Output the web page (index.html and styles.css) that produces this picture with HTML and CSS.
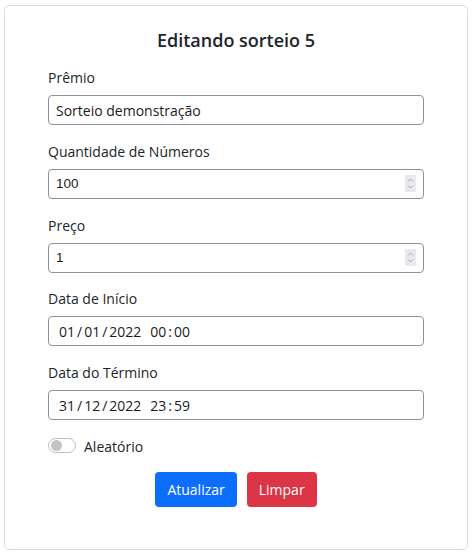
FILE: index.html
```html
<!DOCTYPE html>
<html lang="pt-BR">
<head>
<meta charset="utf-8">
<title>Editando sorteio 5</title>
<link rel="stylesheet" href="styles.css">
</head>
<body>
<div class="card">
  <h1 class="title">Editando sorteio 5</h1>
  <form class="form">
    <div class="field">
      <label class="label">Prêmio</label>
      <input class="control" type="text" value="Sorteio demonstração">
    </div>
    <div class="field">
      <label class="label">Quantidade de Números</label>
      <div class="num">
        <input class="control control-num" type="text" value="100">
        <span class="spin"><svg width="11" height="17" viewBox="0 0 11 17"><rect width="11" height="17" fill="#e9e9ed"/><path d="M3 6.5 L5.5 4 L8 6.5 M3 10.5 L5.5 13 L8 10.5" fill="none" stroke="#a4a4ae" stroke-width="1"/></svg></span>
      </div>
    </div>
    <div class="field">
      <label class="label">Preço</label>
      <div class="num">
        <input class="control control-num" type="text" value="1">
        <span class="spin"><svg width="11" height="17" viewBox="0 0 11 17"><rect width="11" height="17" fill="#e9e9ed"/><path d="M3 6.5 L5.5 4 L8 6.5 M3 10.5 L5.5 13 L8 10.5" fill="none" stroke="#a4a4ae" stroke-width="1"/></svg></span>
      </div>
    </div>
    <div class="field">
      <label class="label">Data de Início</label>
      <div class="control control-date"><span>01</span><span class="sep">/</span><span>01</span><span class="sep">/</span><span>2022</span><span class="time">00</span><span class="sep">:</span><span>00</span></div>
    </div>
    <div class="field">
      <label class="label">Data do Término</label>
      <div class="control control-date"><span>31</span><span class="sep">/</span><span>12</span><span class="sep">/</span><span>2022</span><span class="time">23</span><span class="sep">:</span><span>59</span></div>
    </div>
    <div class="switch-row">
      <span class="switch"><span class="knob"></span></span>
      <label class="switch-label">Aleatório</label>
    </div>
    <div class="actions">
      <button type="button" class="btn btn-primary">Atualizar</button>
      <button type="button" class="btn btn-danger">Limpar</button>
    </div>
  </form>
</div>
</body>
</html>
```
FILE: styles.css
```css
* { box-sizing: border-box; }
body {
  margin: 5px 4px;
  background: #fff;
  color: #212529;
  font-family: "Open Sans", "Noto Sans", sans-serif;
}
.card {
  border: 1px solid #dcdcdc;
  border-radius: 5px;
  padding: 21px 43px 42px;
}
.title {
  margin: 0 0 13px;
  font-size: 18px;
  line-height: 27px;
  font-weight: 600;
  text-align: center;
}
.field + .field { margin-top: 15.75px; }
.label {
  display: block;
  font-size: 14px;
  line-height: 21px;
  margin-bottom: 7px;
}
.control {
  display: block;
  width: 100%;
  height: 30px;
  border: 1px solid #8f8f9d;
  border-radius: 4px;
  padding: 0 7px;
  font-family: inherit;
  font-size: 14px;
  color: #1b1b1b;
  background: #fff;
  outline: none;
}
.num { position: relative; }
.control-num {
  font-family: "Liberation Sans", Arial, sans-serif;
  font-size: 13.5px;
}
.spin {
  position: absolute;
  right: 8px;
  top: 6px;
  width: 11px;
  height: 17px;
  display: block;
}
.spin svg { display: block; }
.control-date {
  display: flex;
  align-items: center;
  padding: 0 10px;
}
.control-date .sep { margin: 0 2px; }
.control-date .time { margin-left: 9px; }
.switch-row {
  display: flex;
  align-items: center;
  gap: 8px;
  height: 21px;
  margin-top: 15px;
}
.switch {
  position: relative;
  width: 28px;
  height: 15px;
  border: 1px solid #bdbdbd;
  border-radius: 8px;
  background: #fff;
}
.knob {
  position: absolute;
  left: 2px;
  top: 1px;
  width: 11px;
  height: 11px;
  border-radius: 50%;
  background: #c4c4c4;
}
.switch-label {
  font-size: 14px;
  line-height: 21px;
  padding-top: 2px;
}
.actions {
  display: flex;
  justify-content: center;
  gap: 10px;
  margin-top: 16px;
}
.btn {
  height: 35px;
  padding: 0 12px;
  border: none;
  border-radius: 4px;
  color: #fff;
  font-family: inherit;
  font-size: 14px;
}
.btn-primary { background: #0d6efd; }
.btn-danger { background: #dc3545; }
```
